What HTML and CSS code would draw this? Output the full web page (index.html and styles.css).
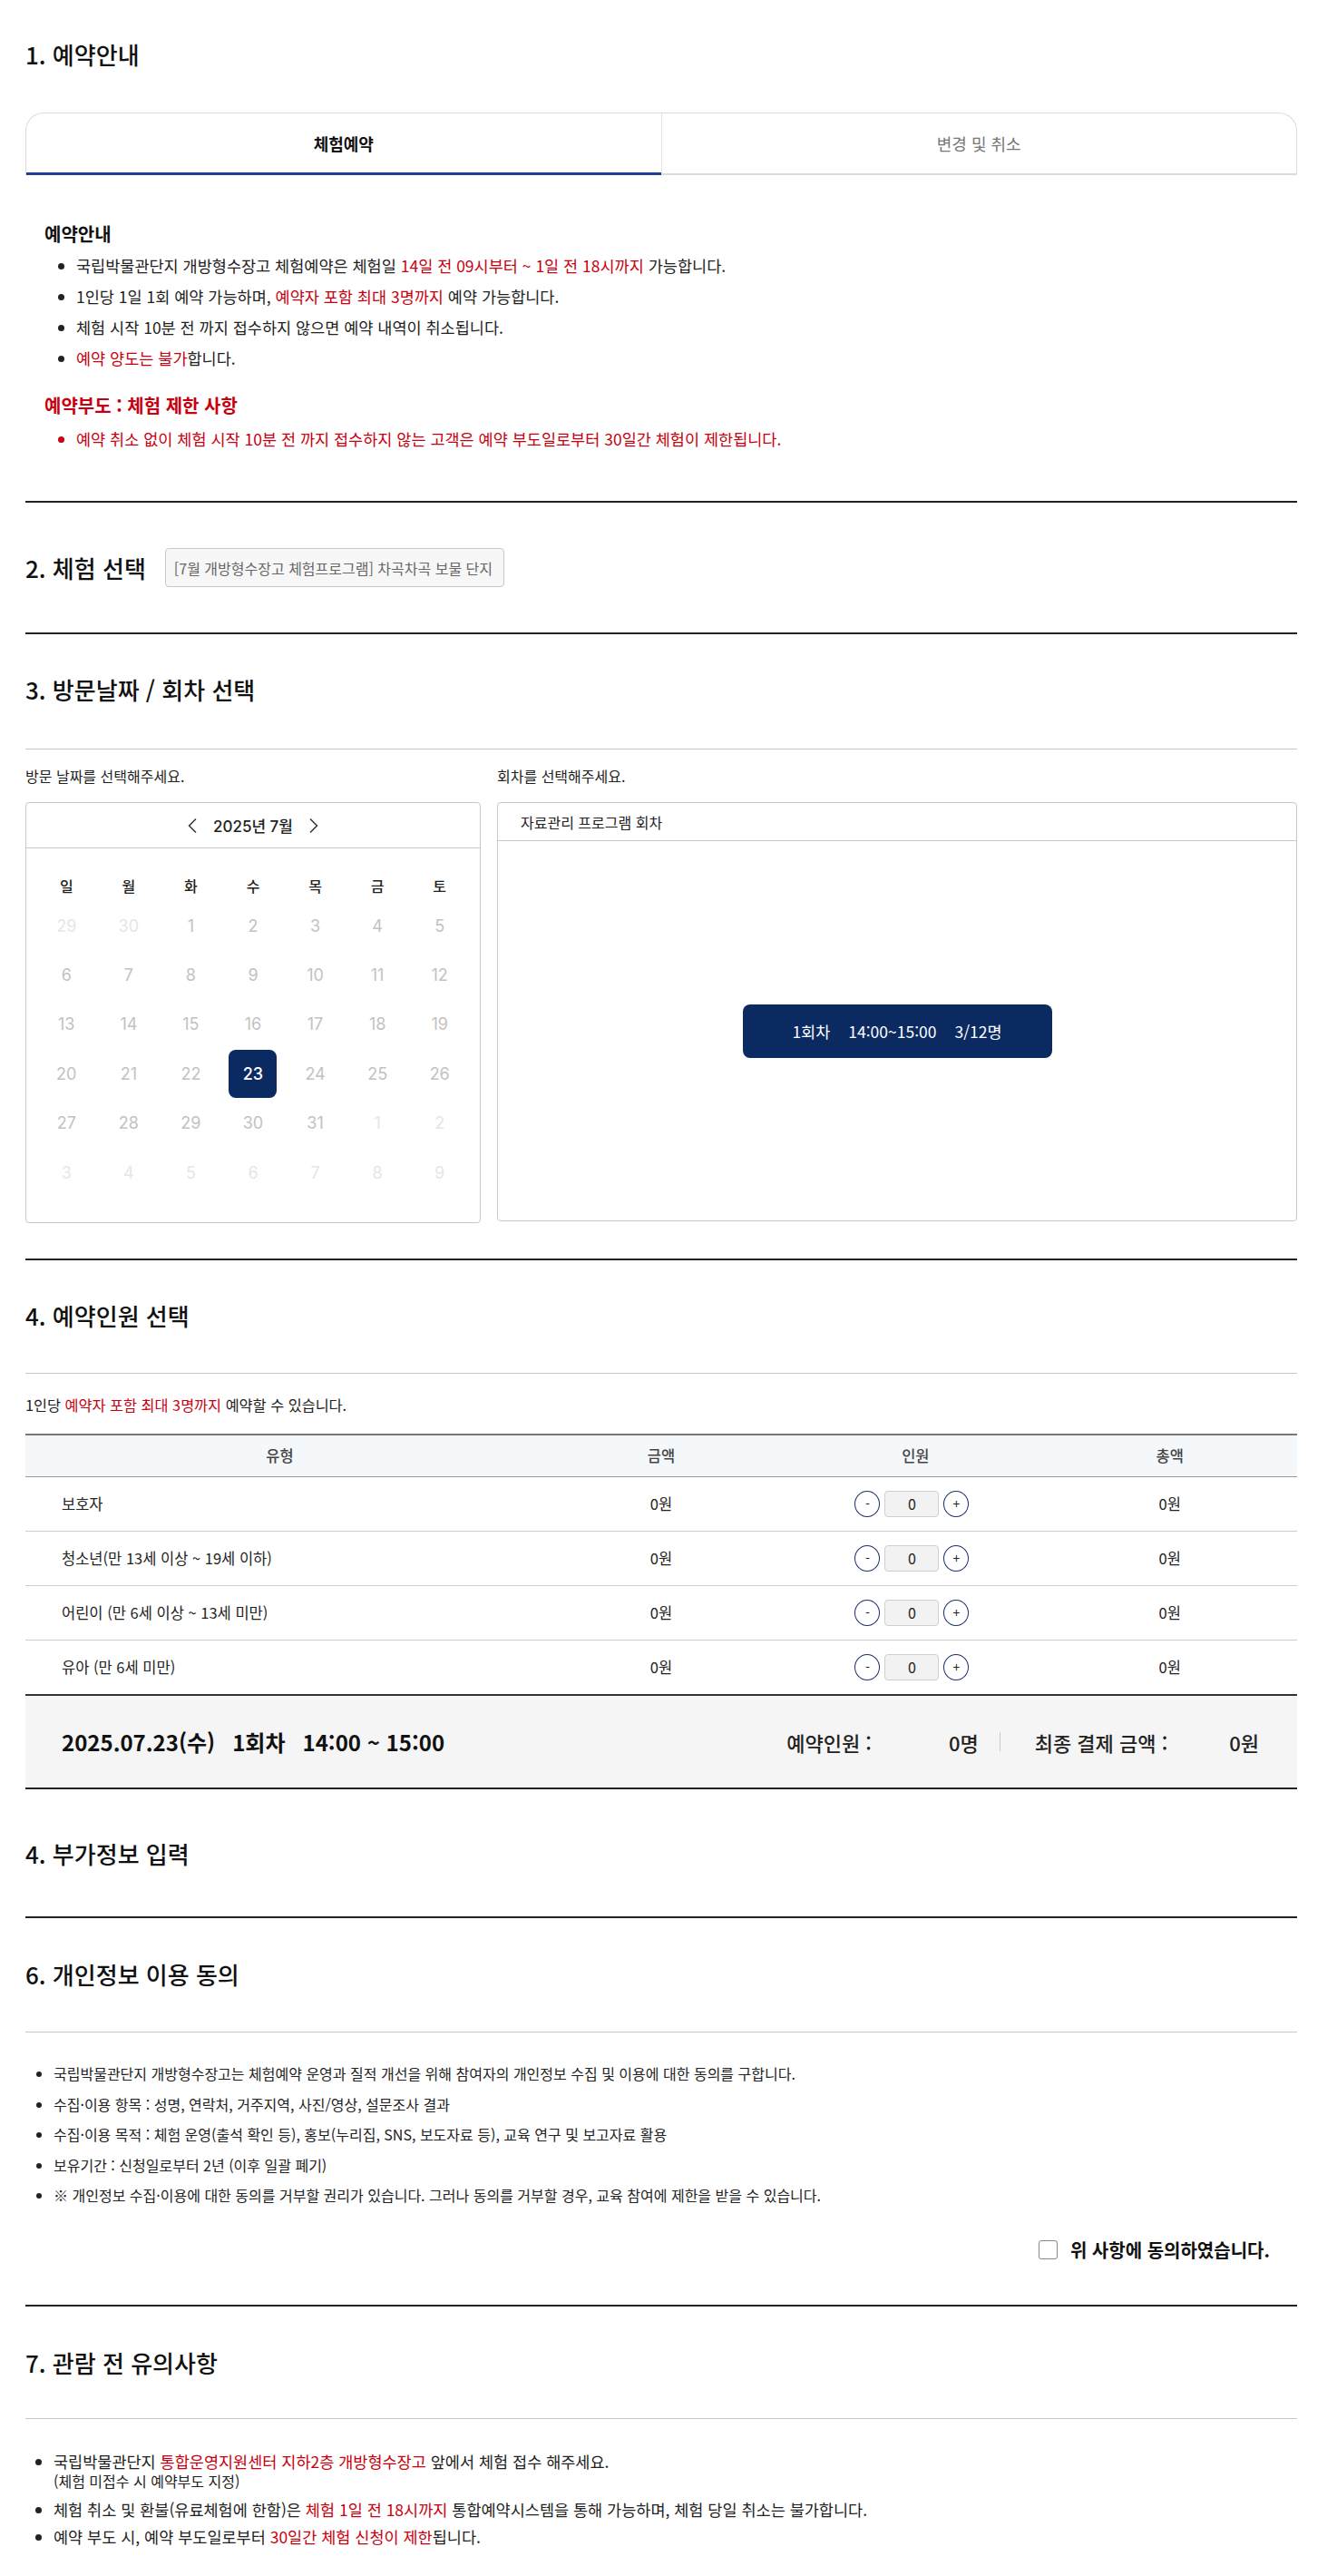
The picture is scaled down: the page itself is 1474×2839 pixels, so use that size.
FILE: index.html
```html
<!DOCTYPE html>
<html lang="ko">
<head>
<meta charset="utf-8">
<title>체험예약</title>
<link rel="stylesheet" href="styles.css">
</head>
<body>
<div class="page">

  <section class="sec sec-first">
    <h2 class="sec-title title-first">1. 예약안내</h2>
    <div class="tabs">
      <div class="tab active">체험예약</div>
      <div class="tab">변경 및 취소</div>
    </div>
    <div class="info">
      <h3 class="info-title">예약안내</h3>
      <ul class="info-list">
        <li>국립박물관단지 개방형수장고 체험예약은 체험일 <span class="red">14일 전 09시부터 ~ 1일 전 18시까지</span> 가능합니다.</li>
        <li>1인당 1일 1회 예약 가능하며, <span class="red">예약자 포함 최대 3명까지</span> 예약 가능합니다.</li>
        <li>체험 시작 10분 전 까지 접수하지 않으면 예약 내역이 취소됩니다.</li>
        <li><span class="red">예약 양도는 불가</span>합니다.</li>
      </ul>
      <h3 class="info-title warn-title">예약부도 : 체험 제한 사항</h3>
      <ul class="info-list red">
        <li>예약 취소 없이 체험 시작 10분 전 까지 접수하지 않는 고객은 예약 부도일로부터 30일간 체험이 제한됩니다.</li>
      </ul>
    </div>
  </section>

  <section class="sec sec-line sec-program">
    <h2 class="sec-title">2. 체험 선택</h2>
    <div class="program-box">[7월 개방형수장고 체험프로그램] 차곡차곡 보물 단지</div>
  </section>

  <section class="sec sec-line">
    <div class="sec-head head-a">
      <h2 class="sec-title">3. 방문날짜 / 회차 선택</h2>
    </div>
    <div class="pick">
      <div class="pick-col">
        <p class="pick-label">방문 날짜를 선택해주세요.</p>
        <div class="calendar">
          <div class="cal-head">
            <svg class="chev" width="12" height="18" viewBox="0 0 12 18"><path d="M10 1.5 L2.5 9 L10 16.5" fill="none" stroke="#333" stroke-width="1.5"/></svg>
            <span class="cal-month">2025년 7월</span>
            <svg class="chev" width="12" height="18" viewBox="0 0 12 18"><path d="M2 1.5 L9.5 9 L2 16.5" fill="none" stroke="#333" stroke-width="1.5"/></svg>
          </div>
          <div class="cal-body">
            <div class="cal-grid">
              <div class="wd">일</div><div class="wd">월</div><div class="wd">화</div><div class="wd">수</div><div class="wd">목</div><div class="wd">금</div><div class="wd">토</div>
              <div class="d off">29</div><div class="d off">30</div><div class="d">1</div><div class="d">2</div><div class="d">3</div><div class="d">4</div><div class="d">5</div>
              <div class="d">6</div><div class="d">7</div><div class="d">8</div><div class="d">9</div><div class="d">10</div><div class="d">11</div><div class="d">12</div>
              <div class="d">13</div><div class="d">14</div><div class="d">15</div><div class="d">16</div><div class="d">17</div><div class="d">18</div><div class="d">19</div>
              <div class="d">20</div><div class="d">21</div><div class="d">22</div><div class="d"><span class="sel">23</span></div><div class="d">24</div><div class="d">25</div><div class="d">26</div>
              <div class="d">27</div><div class="d">28</div><div class="d">29</div><div class="d">30</div><div class="d">31</div><div class="d off">1</div><div class="d off">2</div>
              <div class="d off">3</div><div class="d off">4</div><div class="d off">5</div><div class="d off">6</div><div class="d off">7</div><div class="d off">8</div><div class="d off">9</div>
            </div>
          </div>
        </div>
      </div>
      <div class="pick-col">
        <p class="pick-label">회차를 선택해주세요.</p>
        <div class="session">
          <div class="session-head">자료관리 프로그램 회차</div>
          <div class="session-body">
            <button class="slot"><span>1회차</span><span>14:00~15:00</span><span>3/12명</span></button>
          </div>
        </div>
      </div>
    </div>
  </section>

  <section class="sec sec-line">
    <div class="sec-head head-b">
      <h2 class="sec-title">4. 예약인원 선택</h2>
    </div>
    <p class="note">1인당 <span class="red">예약자 포함 최대 3명까지</span> 예약할 수 있습니다.</p>
    <table class="people">
      <colgroup><col class="c1"><col class="c2"><col class="c3"><col class="c4"></colgroup>
      <thead>
        <tr><th>유형</th><th>금액</th><th>인원</th><th>총액</th></tr>
      </thead>
      <tbody>
        <tr><td class="type">보호자</td><td>0원</td><td><div class="counter"><span class="cbtn">-</span><span class="cval">0</span><span class="cbtn">+</span></div></td><td>0원</td></tr>
        <tr><td class="type">청소년(만 13세 이상 ~ 19세 이하)</td><td>0원</td><td><div class="counter"><span class="cbtn">-</span><span class="cval">0</span><span class="cbtn">+</span></div></td><td>0원</td></tr>
        <tr><td class="type">어린이 (만 6세 이상 ~ 13세 미만)</td><td>0원</td><td><div class="counter"><span class="cbtn">-</span><span class="cval">0</span><span class="cbtn">+</span></div></td><td>0원</td></tr>
        <tr><td class="type">유아 (만 6세 미만)</td><td>0원</td><td><div class="counter"><span class="cbtn">-</span><span class="cval">0</span><span class="cbtn">+</span></div></td><td>0원</td></tr>
      </tbody>
    </table>
    <div class="summary">
      <div class="sum-left">
        <span>2025.07.23(수)</span><span>1회차</span><span>14:00 ~ 15:00</span>
      </div>
      <div class="sum-right">
        <span class="sum-label">예약인원 :</span><span class="sum-val v1">0명</span>
        <span class="sum-div"></span>
        <span class="sum-label">최종 결제 금액 :</span><span class="sum-val v2">0원</span>
      </div>
    </div>
  </section>

  <section class="sec">
    <div class="sec-head head-plain">
      <h2 class="sec-title">4. 부가정보 입력</h2>
    </div>
  </section>

  <section class="sec sec-line">
    <div class="sec-head head-c">
      <h2 class="sec-title">6. 개인정보 이용 동의</h2>
    </div>
    <ul class="plain-list list-agree">
      <li>국립박물관단지 개방형수장고는 체험예약 운영과 질적 개선을 위해 참여자의 개인정보 수집 및 이용에 대한 동의를 구합니다.</li>
      <li>수집·이용 항목 : 성명, 연락처, 거주지역, 사진/영상, 설문조사 결과</li>
      <li>수집·이용 목적 : 체험 운영(출석 확인 등), 홍보(누리집, SNS, 보도자료 등), 교육 연구 및 보고자료 활용</li>
      <li>보유기간 : 신청일로부터 2년 (이후 일괄 폐기)</li>
      <li>※ 개인정보 수집·이용에 대한 동의를 거부할 권리가 있습니다. 그러나 동의를 거부할 경우, 교육 참여에 제한을 받을 수 있습니다.</li>
    </ul>
    <label class="agree"><span class="check"></span><span>위 사항에 동의하였습니다.</span></label>
  </section>

  <section class="sec sec-line">
    <div class="sec-head head-d">
      <h2 class="sec-title">7. 관람 전 유의사항</h2>
    </div>
    <ul class="plain-list list-notice">
      <li>국립박물관단지 <span class="red">통합운영지원센터 지하2층 개방형수장고</span> 앞에서 체험 접수 해주세요.<br><span class="sub">(체험 미접수 시 예약부도 지정)</span></li>
      <li>체험 취소 및 환불(유료체험에 한함)은 <span class="red">체험 1일 전 18시까지</span> 통합예약시스템을 통해 가능하며, 체험 당일 취소는 불가합니다.</li>
      <li>예약 부도 시, 예약 부도일로부터 <span class="red">30일간 체험 신청이 제한</span>됩니다.</li>
    </ul>
  </section>

</div>
</body>
</html>
```

FILE: styles.css
```css
* { box-sizing: border-box; }

body {
  margin: 0;
  background: #fff;
  color: #222;
  font-family: "Noto Sans CJK KR", "Noto Sans", sans-serif;
}

.page {
  width: 1402px;
  margin-left: 28px;
  padding-bottom: 30px;
}

.red { color: #c8000f; }

.sec-title {
  margin: 0;
  font-size: 26px;
  line-height: 34px;
  font-weight: 500;
  color: #111;
}

.sec-line { border-top: 2px solid #222; }

.sec-head { border-bottom: 1px solid #c8c8c8; }
.head-a { padding: 44px 0 48px; }
.head-b { padding: 44px 0 46px; }
.head-c { padding: 45px 0 46px; }
.head-d { padding: 45px 0 44px; }
.head-plain { padding: 54px 0 52px; border-bottom: none; }

/* section 1 */
.title-first { padding-top: 43px; margin-bottom: 47px; }

.tabs {
  display: flex;
  height: 69px;
  border: 1px solid #dcdcdc;
  border-bottom: none;
  border-radius: 20px 20px 0 0;
  overflow: hidden;
}
.tab {
  flex: 1;
  display: flex;
  align-items: center;
  justify-content: center;
  font-size: 18px;
  color: #777;
  border-bottom: 2px solid #dcdcdc;
}
.tab + .tab { border-left: 1px solid #e4e4e4; }
.tab.active {
  color: #111;
  font-weight: 700;
  border-bottom: 3px solid #1e3f94;
}

.info { padding: 52px 21px 51px; }
.info-title {
  margin: 0 0 5px;
  font-size: 20px;
  line-height: 26px;
  font-weight: 700;
  color: #111;
}
.warn-title { margin: 22px 0 7px; color: #c8000f; }
.info-list {
  margin: 0;
  padding-left: 35px;
  list-style: disc;
}
.info-list li {
  font-size: 17.5px;
  line-height: 34px;
}

/* section 2 */
.sec-program {
  display: flex;
  align-items: center;
  gap: 21px;
  padding: 50px 0;
}
.program-box {
  height: 43px;
  display: flex;
  align-items: center;
  padding: 0 12px 0 9px;
  background: #f7f7f7;
  border: 1px solid #c8c8c8;
  border-radius: 4px;
  font-size: 16px;
  color: #666;
}

/* section 3 */
.pick {
  display: grid;
  grid-template-columns: 502px 1fr;
  column-gap: 18px;
  padding: 18px 0 39px;
}
.pick-label {
  margin: 0 0 18px;
  font-size: 16px;
  line-height: 22px;
  color: #222;
}

.calendar {
  height: 464px;
  border: 1px solid #c8c8c8;
  border-radius: 4px;
  font-family: "Inter", "Noto Sans CJK KR", sans-serif;
}
.cal-head {
  height: 50px;
  border-bottom: 1px solid #c8c8c8;
  display: flex;
  align-items: center;
  justify-content: center;
  gap: 17px;
}
.cal-month {
  font-size: 17px;
  color: #222;
  font-weight: 500;
}
.cal-body { padding: 24px 10px 0; }
.cal-grid {
  display: grid;
  grid-template-columns: repeat(7, 1fr);
  grid-template-rows: 34px repeat(6, 54.4px);
}
.wd {
  display: flex;
  align-items: center;
  justify-content: center;
  font-size: 16px;
  color: #222;
  font-weight: 500;
}
.d {
  display: flex;
  align-items: center;
  justify-content: center;
  font-size: 18px;
  color: #c2c2c2;
}
.d.off { color: #e6e6e6; }
.sel {
  width: 53px;
  height: 53px;
  border-radius: 8px;
  background: #0b2a62;
  color: #fff;
  display: flex;
  align-items: center;
  justify-content: center;
  font-weight: 500;
}

.session {
  height: 462px;
  border: 1px solid #c8c8c8;
  border-radius: 4px;
  display: flex;
  flex-direction: column;
}
.session-head {
  height: 42px;
  flex: none;
  border-bottom: 1px solid #c8c8c8;
  display: flex;
  align-items: center;
  padding-left: 25px;
  font-size: 16px;
  color: #222;
}
.session-body {
  flex: 1;
  display: flex;
  align-items: center;
  justify-content: center;
}
.slot {
  width: 341px;
  height: 59px;
  border: none;
  border-radius: 8px;
  background: #0b2a62;
  color: #fff;
  font-family: inherit;
  font-size: 17.5px;
  display: flex;
  align-items: center;
  justify-content: center;
  gap: 20px;
}

/* section 4 */
.note {
  margin: 23px 0 21px;
  font-size: 16.3px;
  line-height: 22px;
  color: #222;
}

.people {
  width: 100%;
  border-collapse: collapse;
  border-top: 2px solid #777;
  font-size: 16.5px;
}
.people .c1 { width: 40%; }
.people .c2, .people .c3, .people .c4 { width: 20%; }
.people th {
  height: 46px;
  background: #f4f8fa;
  border-bottom: 1px solid #999;
  font-weight: 500;
  color: #444;
  text-align: center;
}
.people td {
  height: 60px;
  border-bottom: 1px solid #ccc;
  text-align: center;
  color: #222;
}
.people tbody tr:last-child td { border-bottom: none; }
.people td.type { text-align: left; padding-left: 40px; }

.counter {
  display: inline-flex;
  align-items: center;
  gap: 5px;
  margin-right: 8px;
}
.cbtn {
  width: 28px;
  height: 29px;
  border: 1px solid #1c2f6b;
  border-radius: 50%;
  display: flex;
  align-items: center;
  justify-content: center;
  font-size: 14px;
  color: #222;
}
.cval {
  width: 60px;
  height: 29px;
  border: 1px solid #cfcfcf;
  border-radius: 4px;
  background: #f2f2f2;
  display: flex;
  align-items: center;
  justify-content: center;
  font-size: 16px;
}

.summary {
  height: 105px;
  background: #f5f5f5;
  border-top: 2px solid #333;
  border-bottom: 2px solid #222;
  display: flex;
  align-items: center;
  justify-content: space-between;
  padding: 0 42px 0 40px;
}
.sum-left {
  display: flex;
  gap: 19px;
  font-size: 24px;
  font-weight: 700;
  color: #111;
}
.sum-right {
  display: flex;
  align-items: center;
  font-size: 22px;
  font-weight: 500;
  color: #222;
}
.sum-val.v1 { margin-left: 85px; }
.sum-val.v2 { margin-left: 68px; }
.sum-div {
  width: 1px;
  height: 21px;
  background: #ccc;
  margin: 0 38px 0 23px;
}

/* sections 6, 7 */
.plain-list {
  margin: 0;
  padding-left: 31px;
  list-style: disc;
}
.plain-list li {
  font-size: 16px;
  line-height: 21px;
}
.list-agree { margin-top: 35px; }
.list-agree li { margin-bottom: 12.5px; }
.list-agree li:last-child { margin-bottom: 0; }
.list-notice { margin-top: 36px; }
.list-notice li {
  font-size: 17.5px;
  margin-bottom: 9.5px;
}
.list-notice li:last-child { margin-bottom: 0; }
.list-notice .sub { font-size: 16px; }

.agree {
  display: flex;
  justify-content: flex-end;
  align-items: center;
  gap: 14px;
  height: 30px;
  margin-top: 34px;
  margin-bottom: 46px;
  padding-right: 30px;
  font-size: 20px;
  font-weight: 700;
  color: #111;
}
.check {
  width: 21px;
  height: 21px;
  border: 1px solid #888;
  border-radius: 3px;
  background: #fff;
}
```
